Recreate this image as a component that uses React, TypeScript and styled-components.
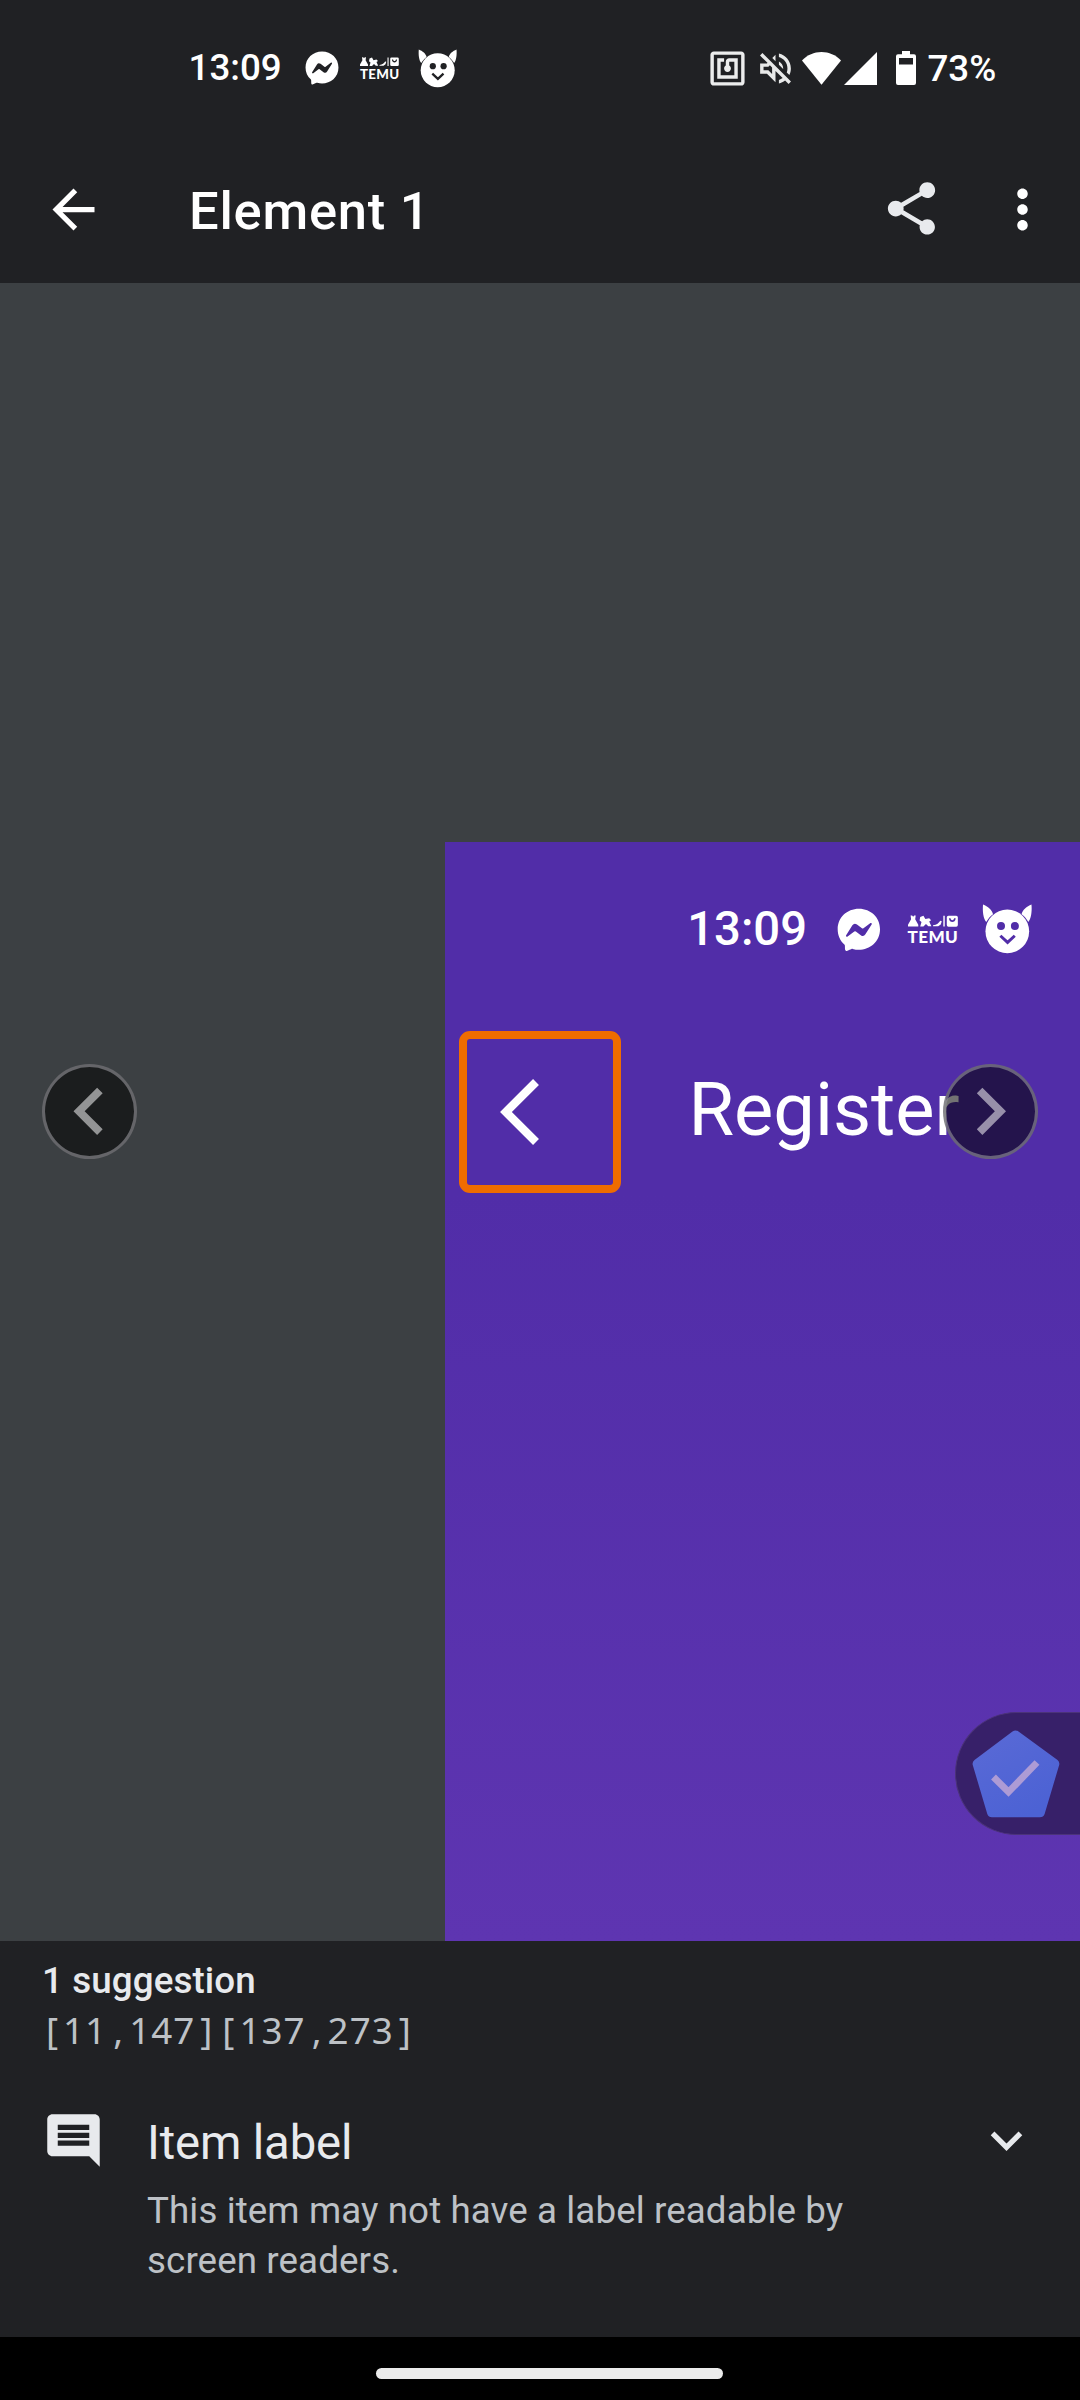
import React from "react";
import styled, { createGlobalStyle } from "styled-components";
import { FaFacebookMessenger } from "react-icons/fa";

const GlobalStyle = createGlobalStyle`
  * { box-sizing: border-box; }
  html, body { margin: 0; padding: 0; background: #000; }
  body { font-family: Roboto, "Noto Sans", sans-serif; }
  svg { display: block; flex: none; }
`;

const Phone = styled.div`
  width: 1080px;
  height: 2400px;
  display: flex;
  flex-direction: column;
  overflow: hidden;
  background: #202124;
`;

/* Status bar: every length is multiplied by $k so the magnified preview can reuse it. */
const StatusRow = styled.div<{ $k: number }>`
  height: ${(p) => 136 * p.$k}px;
  padding-left: ${(p) => 188.5 * p.$k}px;
  display: flex;
  align-items: center;
  flex: none;
  color: #fff;
`;

const Clock = styled.span<{ $k: number }>`
  width: ${(p) => 92.5 * p.$k}px;
  flex: none;
  font-size: ${(p) => 36.75 * p.$k}px;
  line-height: 1.2;
  font-weight: 500;
  white-space: nowrap;
  margin-top: ${(p) => -0.6 * p.$k}px;
`;

const IconSlot = styled.span<{ $w: number; $gap: number }>`
  display: flex;
  flex: none;
  width: ${(p) => p.$w}px;
  margin-left: ${(p) => p.$gap}px;
`;

const SystemIcons = styled.div`
  display: flex;
  align-items: center;
  width: 373.5px;
  margin-left: auto;
`;

const Battery = styled.span`
  margin: 1px 0 0 11.5px;
  font-size: 36.75px;
  line-height: 44px;
  font-weight: 500;
`;

const TemuMark = styled.span<{ $k: number }>`
  display: flex;
  flex-direction: column;
  gap: ${(p) => 1.4 * p.$k}px;
  flex: none;
  width: ${(p) => 39 * p.$k}px;
  margin-top: ${(p) => 1.2 * p.$k}px;
  margin-left: ${(p) => 21 * p.$k}px;
`;

const TemuWord = styled.span<{ $k: number }>`
  font-family: Lato, sans-serif;
  font-weight: 900;
  font-size: ${(p) => 13.3 * p.$k}px;
  line-height: ${(p) => 12 * p.$k}px;
  letter-spacing: ${(p) => 0.3 * p.$k}px;
  white-space: nowrap;
`;

function Temu({ k }: { k: number }) {
  return (
    <TemuMark $k={k}>
      <svg width={39 * k} height={9.5 * k} viewBox="0 0 39 9.5" fill="currentColor">
        <path d="M2 .3h1.2l.8 1 .8-1H6L5.600 3.300 8 7.500V9H0V7.500L2.400 3.300Z" />
        <path d="M9.500 1.500 12 .5l1.500 2.700 3-.7L18 4l-1.500 1 1.700 3.800h-2.400L14 7l-2 2H9.500l1-3.500L9 4.200Z" />
        <path d="M19.500 8c3-.4 4.500-1.700 5.600-3.500l1.200.3-.8 2.500-2 1.500h-4Z" />
        <path d="M27.500.5h1.100v8.400h-1.100Z" />
        <path
          fillRule="evenodd"
          d="M31.500.5h6a1.300 1.300 0 0 1 1.300 1.300v6a1.300 1.300 0 0 1-1.300 1.300h-6a1.300 1.300 0 0 1-1.300-1.300v-6A1.300 1.300 0 0 1 31.500.5Zm.4 2c.2 4 5 4 5.200 0h-1.200c-.3 2-2.500 2-2.800 0Z"
        />
      </svg>
      <TemuWord $k={k}>TEMU</TemuWord>
    </TemuMark>
  );
}

function Devil({ k }: { k: number }) {
  return (
    <svg width={39 * k} height={39 * k} viewBox="0 0 39 39">
      <circle cx="19.700" cy="21.300" r="17" fill="#fff" />
      <path d="M.8.4C.3 5.500 1 11.500 3.300 14 4.800 11.500 6.500 9.500 8.600 8 8 4.500 4.500 2 .8.400Z" fill="#fff" />
      <path d="M38.500.4c.5 5.100-.2 11.100-2.400 13.600-1.500-2.500-3.200-4.500-5.300-6C31.400 4.500 34.900 2 38.500.4Z" fill="#fff" />
      <circle cx="14.800" cy="17.200" r="3.100" fill="currentColor" />
      <circle cx="25.600" cy="17.200" r="3.100" fill="currentColor" />
      <path d="m14.300 24.700 5.600 5.200 5.600-5.200" fill="none" stroke="currentColor" strokeWidth="2.300" />
    </svg>
  );
}

const DevilSlot = styled(IconSlot)<{ $cut: string }>`
  color: ${(p) => p.$cut};
`;

function Notifications({ k, cut }: { k: number; cut: string }) {
  return (
    <>
      <Clock $k={k}>13:09</Clock>
      <IconSlot $w={34 * k} $gap={24 * k}>
        <FaFacebookMessenger size={34 * k} />
      </IconSlot>
      <Temu k={k} />
      <DevilSlot $w={39 * k} $gap={19 * k} $cut={cut}>
        <Devil k={k} />
      </DevilSlot>
    </>
  );
}

const Icon = ({ d, size = 63, fill = "#fff" }: { d: string; size?: number; fill?: string }) => (
  <svg width={size} height={size} viewBox="0 0 24 24" fill={fill}>
    <path d={d} />
  </svg>
);

const paths = {
  nfc: "M20 2H4c-1.100 0-2 .9-2 2v16c0 1.100.9 2 2 2h16c1.100 0 2-.9 2-2V4c0-1.100-.9-2-2-2zm0 18H4V4h16v16zM18 6h-5c-1.100 0-2 .9-2 2v2.280c-.6.35-1 .98-1 1.720 0 1.100.9 2 2 2s2-.9 2-2c0-.74-.4-1.380-1-1.720V8h3v8H8V8h2V6H6v12h12V6z",
  mute: "M4.340 2.930L2.930 4.340 7.290 8.700 7 9H3v6h4l5 5v-6.590l4.180 4.180c-.65.49-1.380.88-2.180 1.110v2.060c1.340-.3 2.570-.92 3.610-1.750l2.050 2.050 1.410-1.410L4.340 2.930zM10 15.170L7.830 13H5v-2h2.830l.88-.88L10 11.410v3.760zM19 12c0 .82-.15 1.610-.41 2.340l1.530 1.530c.56-1.170.88-2.480.88-3.870 0-4.280-2.990-7.860-7-8.770v2.060c2.890.86 5 3.540 5 6.710zm-7-8l-1.880 1.880L12 7.760zm4.500 8c0-1.770-1.020-3.290-2.500-4.030v1.790l2.480 2.480c.01-.08.02-.16.02-.24z",
  back: "M20 11H7.830l5.590-5.590L12 4l-8 8 8 8 1.410-1.410L7.830 13H20v-2z",
  share:
    "M18 16.080c-.76 0-1.440.3-1.960.77L8.910 12.700c.05-.23.09-.46.09-.7s-.04-.47-.09-.7l7.050-4.110c.54.5 1.250.81 2.040.81 1.660 0 3-1.340 3-3s-1.340-3-3-3-3 1.340-3 3c0 .24.04.47.09.7L8.040 9.810C7.500 9.310 6.790 9 6 9c-1.660 0-3 1.340-3 3s1.340 3 3 3c.79 0 1.500-.31 2.040-.81l7.120 4.160c-.05.21-.08.43-.08.65 0 1.610 1.310 2.920 2.920 2.920s2.920-1.310 2.920-2.920-1.310-2.920-2.920-2.920z",
  more: "M12 8c1.100 0 2-.9 2-2s-.9-2-2-2-2 .9-2 2 .9 2 2 2zm0 2c-1.100 0-2 .9-2 2s.9 2 2 2 2-.9 2-2-.9-2-2-2zm0 6c-1.100 0-2 .9-2 2s.9 2 2 2 2-.9 2-2-.9-2-2-2z",
  comment:
    "M21.990 4c0-1.100-.89-2-1.990-2H4c-1.100 0-2 .9-2 2v12c0 1.100.9 2 2 2h14l4 4-.01-18zM18 14H6v-2h12v2zm0-3H6V9h12v2zm0-3H6V6h12v2z",
  expand: "M16.590 8.590L12 13.170 7.410 8.590 6 10l6 6 6-6z",
  prev: "M15.410 7.410L14 6l-6 6 6 6 1.410-1.410L10.830 12z",
  next: "M10 6L8.590 7.410 13.170 12l-4.580 4.590L10 18l6-6z",
};

const Toolbar = styled.header`
  height: 147px;
  flex: none;
  display: flex;
  align-items: center;
  padding: 0 26px 0 42px;
`;

const ToolbarTitle = styled.h1`
  flex: 1;
  margin: 3px 0 0 84px;
  font-size: 52.5px;
  line-height: 62px;
  font-weight: 500;
  letter-spacing: 0.75px;
  color: #fff;
`;

const Actions = styled.div`
  display: flex;
  gap: 48.5px;

  svg:first-child {
    margin-top: -1.5px;
  }
`;

const Stage = styled.main`
  position: relative;
  height: 1658px;
  flex: none;
  display: flex;
  padding: 559px 0 0 445px;
  background: #3c4043;
  overflow: hidden;
`;

const Preview = styled.section`
  flex: 1;
  min-width: 0;
  display: flex;
  flex-direction: column;
  overflow: hidden;
  background: linear-gradient(#512da8 0%, #512da8 32%, #5e35b1 100%);
`;

const PreviewBar = styled.div`
  display: flex;
  align-items: center;
  padding: 14px 0 0 14px;
`;

const Highlight = styled.div`
  width: 162px;
  height: 162px;
  flex: none;
  display: flex;
  align-items: center;
  padding-left: 33px;
  border: 8px solid #ef6c00;
  border-radius: 11px;
`;

const PreviewTitle = styled.span`
  margin: -4px 0 0 67.5px;
  font-size: 74px;
  line-height: 90px;
  color: #fff;
`;

const StepButton = styled.button<{ $x: number }>`
  position: absolute;
  top: 781px;
  left: ${(p) => p.$x}px;
  width: 95px;
  height: 95px;
  padding: 0;
  display: flex;
  align-items: center;
  justify-content: center;
  border: 3px solid rgba(150, 150, 155, 0.6);
  border-radius: 50%;
  background: rgba(0, 0, 0, 0.55);
`;

const ScannerButton = styled.button`
  position: absolute;
  top: 1429px;
  right: -8px;
  width: 133.5px;
  height: 123px;
  padding: 0 0 0 16px;
  display: flex;
  align-items: center;
  border: 1px solid #4b3379;
  border-right: 0;
  border-radius: 62px 0 0 62px;
  background: #372069;
`;

const Panel = styled.section`
  height: 396px;
  flex: none;
  padding: 14.5px 42px 0;
  color: #e8eaed;
`;

const Count = styled.h2`
  margin: 0;
  font-size: 36.75px;
  line-height: 50px;
  font-weight: 500;
  letter-spacing: 0.1px;
`;

const Bounds = styled.div`
  height: 50px;
  margin: -1px 0 0 -1px;
  font-family: "Noto Sans", sans-serif;
  font-size: 36.75px;
  line-height: 50px;
  white-space: nowrap;
  color: #bdc1c6;
`;

/* Digits and punctuation are padded out to one fixed 22.05px pitch. */
const Digits = styled.span`
  letter-spacing: 1.03px;
`;

const Mark = styled.span<{ $pad: number }>`
  padding: 0 ${(p) => p.$pad}px;
`;

const Finding = styled.article`
  display: flex;
  align-items: flex-start;
  margin-top: 54px;
`;

const FindingText = styled.div`
  flex: 1;
  padding-left: 42px;
`;

const FindingTitle = styled.h3`
  margin: 2px 0 11.5px;
  font-size: 47.25px;
  line-height: 64px;
  font-weight: 400;
  letter-spacing: -0.15px;
`;

const FindingBody = styled.p`
  margin: 0;
  width: 740px;
  font-size: 36.75px;
  line-height: 50px;
  letter-spacing: 0.09px;
  color: #bdc1c6;
`;

const NavBar = styled.footer`
  height: 63px;
  flex: none;
  display: flex;
  justify-content: center;
  padding: 31px 0 0 19px;
  background: #000;
`;

const Handle = styled.div`
  width: 347px;
  height: 11px;
  border-radius: 6px;
  background: #ebebeb;
`;

function BoundsText({ value }: { value: string }) {
  const parts = value.match(/\d+|\D/g) ?? [];
  return (
    <Bounds>
      {parts.map((part, i) =>
        /\d/.test(part) ? (
          <Digits key={i}>{part}</Digits>
        ) : (
          <Mark key={i} $pad={part === "," ? 6.1 : 4.97}>
            {part}
          </Mark>
        )
      )}
    </Bounds>
  );
}

export default function App() {
  return (
    <Phone>
      <GlobalStyle />
      <StatusRow $k={1}>
        <Notifications k={1} cut="#202124" />
        <SystemIcons>
          <Icon d={paths.nfc} size={41} fill="#eceded" />
          <IconSlot $w={41} $gap={7}>
            <Icon d={paths.mute} size={41} fill="#e8e9e9" />
          </IconSlot>
          <IconSlot $w={39} $gap={6.4}>
            <svg width="39" height="33" viewBox="0 0 39 33" fill="#fff">
              <path d="M0 8.500C5.500 3 12 .1 19.500.1S33.500 3 39 8.500L19.500 32.700Z" />
            </svg>
          </IconSlot>
          <IconSlot $w={33} $gap={3}>
            <svg width="33" height="33" viewBox="0 0 33 33" fill="#fff">
              <path d="M33 0v33H0Z" />
            </svg>
          </IconSlot>
          <IconSlot $w={20} $gap={19}>
            <svg width="20" height="34" viewBox="0 0 20 34" fill="#fff">
              <path
                fillRule="evenodd"
                d="M6 0h8v3.300h4A2 2 0 0 1 20 5.300V32a2 2 0 0 1-2 2H2a2 2 0 0 1-2-2V5.300a2 2 0 0 1 2-2h4ZM3 7v6.500h14V7Z"
              />
            </svg>
          </IconSlot>
          <Battery>73%</Battery>
        </SystemIcons>
      </StatusRow>

      <Toolbar>
        <Icon d={paths.back} />
        <ToolbarTitle>Element 1</ToolbarTitle>
        <Actions>
          <Icon d={paths.share} fill="#e8eaed" />
          <Icon d={paths.more} />
        </Actions>
      </Toolbar>

      <Stage>
        <Preview>
          <StatusRow $k={1.285}>
            <Notifications k={1.285} cut="#512da8" />
          </StatusRow>
          <PreviewBar>
            <Highlight>
              <svg width="39" height="66" viewBox="0 2.100 11.670 19.800" fill="#fff">
                <path d="M11.670 3.870 9.900 2.100 0 12l9.900 9.900 1.770-1.770L3.540 12z" />
              </svg>
            </Highlight>
            <PreviewTitle>Register</PreviewTitle>
          </PreviewBar>
        </Preview>
        <StepButton $x={42}>
          <Icon d={paths.prev} size={94.5} fill="rgba(255,255,255,0.53)" />
        </StepButton>
        <StepButton $x={942.5}>
          <Icon d={paths.next} size={94.5} fill="rgba(255,255,255,0.53)" />
        </StepButton>
        <ScannerButton>
          <svg width="88" height="88" viewBox="0 0 88 88">
            <defs>
              <linearGradient id="badge" x1="0" y1="0" x2="0.6" y2="1">
                <stop offset="0" stopColor="#5a6ad6" />
                <stop offset="1" stopColor="#4c62d4" />
              </linearGradient>
            </defs>
            <path
              d="M40.500 1.600a5 5 0 0 1 6 0L85.500 30a5 5 0 0 1 1.600 5.300L72.600 84a5 5 0 0 1-4.700 3.300H20A5 5 0 0 1 15.300 84L.9 35.500A5 5 0 0 1 2.500 30Z"
              fill="url(#badge)"
            />
            <path d="m21.500 47 15 15 28.500-29.500" fill="none" stroke="#ad9bd5" strokeWidth="6.800" />
          </svg>
        </ScannerButton>
      </Stage>

      <Panel>
        <Count>1 suggestion</Count>
        <BoundsText value="[11,147][137,273]" />
        <Finding>
          <Icon d={paths.comment} fill="#e8eaed" />
          <FindingText>
            <FindingTitle>Item label</FindingTitle>
            <FindingBody>This item may not have a label readable by screen readers.</FindingBody>
          </FindingText>
          <Icon d={paths.expand} fill="#e8eaed" />
        </Finding>
      </Panel>

      <NavBar>
        <Handle />
      </NavBar>
    </Phone>
  );
}
